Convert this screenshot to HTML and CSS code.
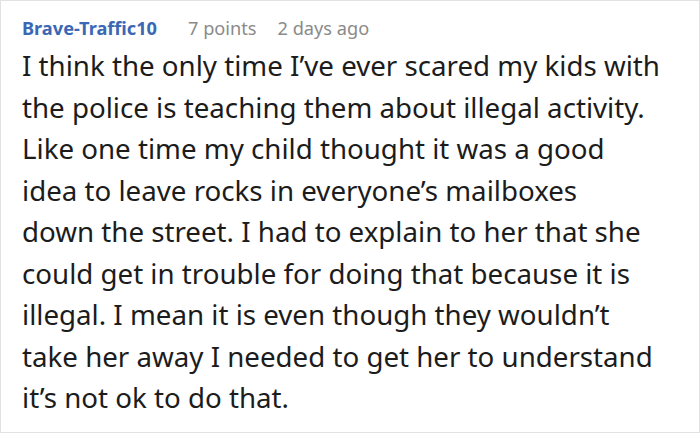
FILE: index.html
```html
<!DOCTYPE html>
<html>
<head>
<meta charset="utf-8">
<link rel="stylesheet" href="styles.css">
</head>
<body>
<div class="comment">
  <div class="meta">
    <span class="author">Brave-Traffic10</span>
    <span class="points">7 points</span>
    <span class="date">2 days ago</span>
  </div>
  <p class="body">I think the only time I’ve ever scared my kids with<br>the police is teaching them about illegal activity.<br>Like one time my child thought it was a good<br>idea to leave rocks in everyone’s mailboxes<br>down the street. I had to explain to her that she<br>could get in trouble for doing that because it is<br>illegal. I mean it is even though they wouldn’t<br>take her away I needed to get her to understand<br>it’s not ok to do that.</p>
</div>
</body>
</html>
```
FILE: styles.css
```css
html, body {
  margin: 0;
  padding: 0;
  background: #ffffff;
}
.comment {
  box-sizing: border-box;
  width: 700px;
  height: 433px;
  border: 1px solid #e2e2e2;
  padding: 16px 8px 0 21px;
  font-family: "Noto Sans", sans-serif;
}
.meta {
  display: flex;
  align-items: baseline;
  font-size: 18.2px;
  line-height: 23px;
}
.author {
  font-weight: 700;
  color: #3a68b4;
}
.points {
  color: #8a8a8a;
  margin-left: 31px;
}
.date {
  color: #8a8a8a;
  margin-left: 21px;
}
.body {
  margin: 5px 0 0 0;
  font-size: 27.7px;
  line-height: 41.5px;
  color: #1c1c1c;
}
```
